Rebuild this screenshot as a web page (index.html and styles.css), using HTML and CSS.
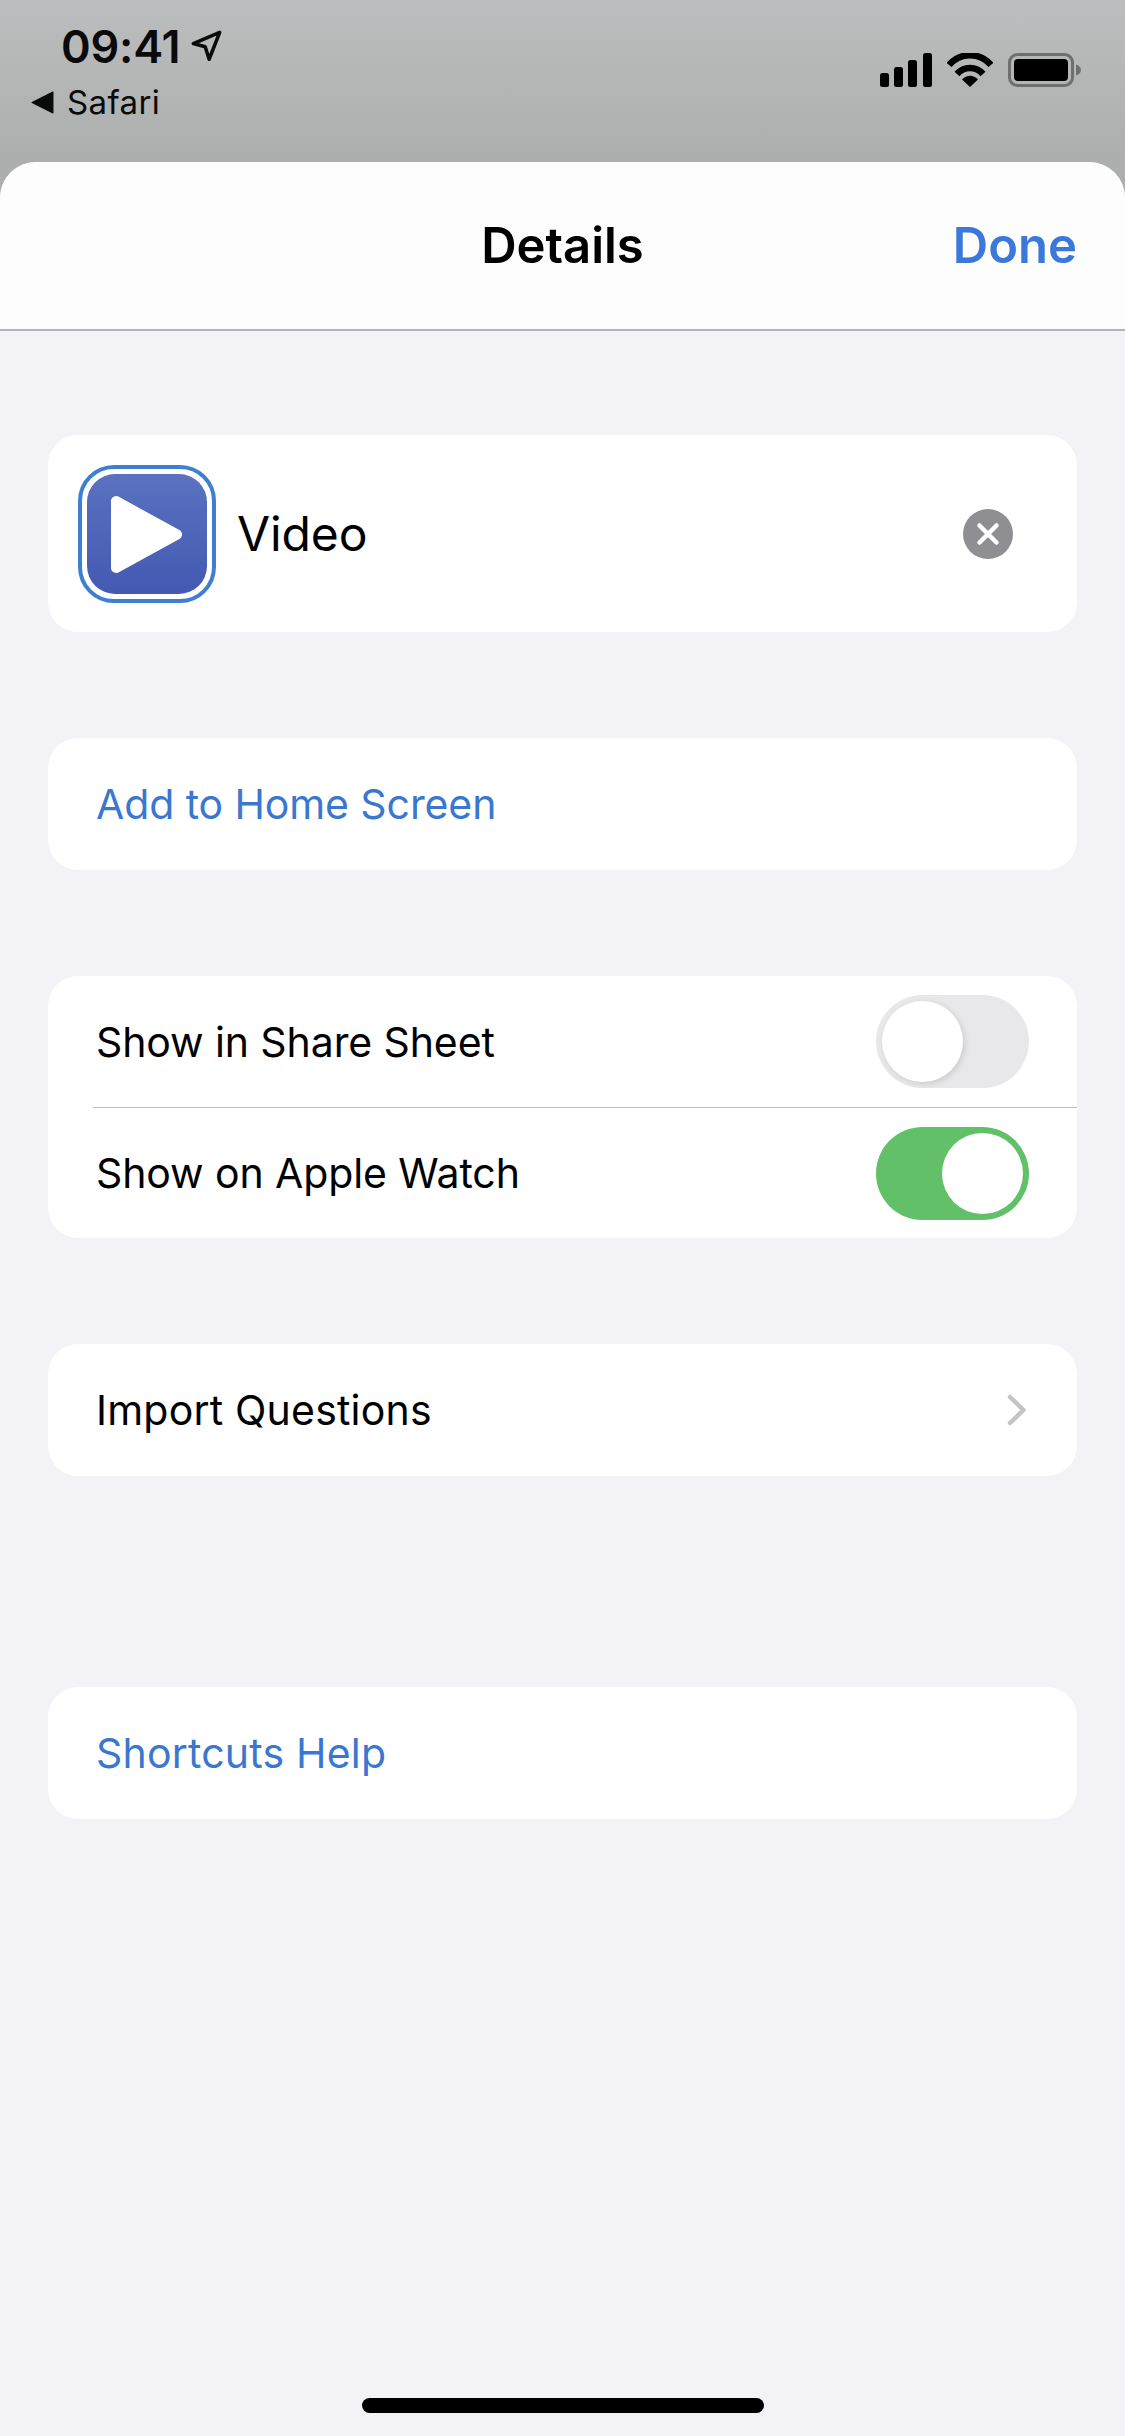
FILE: index.html
```html
<!DOCTYPE html>
<html lang="en">
<head>
<meta charset="utf-8">
<title>Details</title>
<link rel="stylesheet" href="styles.css">
</head>
<body>
<div class="screen">
  <header class="status">
    <div class="status-left">
      <div class="time-row">
        <span class="time">09:41</span>
        <svg class="loc" viewBox="0 0 30 30" width="33" height="33"><path d="M27 3 3 13.200 13.800 16.200 17.400 27.500Z" fill="none" stroke="#0a0a0a" stroke-width="3.200" stroke-linejoin="round"/></svg>
      </div>
      <div class="back-row">
        <svg class="back" viewBox="0 0 22 22" width="23" height="23"><path d="M21 1V21L1 11Z" fill="#0a0a0a" stroke="#0a0a0a" stroke-width="1" stroke-linejoin="round"/></svg>
        <span class="back-label">Safari</span>
      </div>
    </div>
    <div class="status-right">
      <svg viewBox="0 0 52 34" width="52" height="34"><g fill="#000"><rect x="0" y="20" width="9" height="14" rx="2.500"/><rect x="14" y="14" width="9" height="20" rx="2.500"/><rect x="28" y="7" width="9" height="27" rx="2.500"/><rect x="43" y="0" width="9" height="34" rx="2.500"/></g></svg>
      <svg viewBox="0 0 46 34" width="46" height="34"><path d="M2 12C13-1 33-1 44 12" fill="none" stroke="#000" stroke-width="6.500"/><path d="M10 21C17 13 29 13 36 21" fill="none" stroke="#000" stroke-width="6.500"/><path d="M15 26.500C20 21.500 26 21.500 31 26.500L23 34Z" fill="#000"/></svg>
      <svg viewBox="0 0 74 34" width="74" height="34"><rect x="1.500" y="1.500" width="63" height="31" rx="8" fill="none" stroke="#6f6f6f" stroke-width="3"/><rect x="6" y="6" width="54" height="22" rx="4" fill="#000"/><path d="M68 11.500C71.500 12.500 73 15 73 17C73 19 71.500 21.500 68 22.500Z" fill="#6f6f6f"/></svg>
    </div>
  </header>

  <section class="sheet">
    <div class="navbar">
      <h1 class="title">Details</h1>
      <span class="done">Done</span>
    </div>

    <main class="content">
      <div class="card name-card">
        <div class="icon-ring">
          <div class="icon-tile">
            <svg viewBox="0 0 120 120" width="120" height="120"><path d="M29 27V94L90 60.500Z" fill="#fff" stroke="#fff" stroke-width="10" stroke-linejoin="round"/></svg>
          </div>
        </div>
        <span class="row-text name-text">Video</span>
        <span class="clear">
          <svg viewBox="0 0 50 50" width="50" height="50"><path d="M16.500 16.500 33.500 33.500M33.500 16.500 16.500 33.500" stroke="#fff" stroke-width="4.500" stroke-linecap="round"/></svg>
        </span>
      </div>

      <div class="card row-card">
        <span class="row-text link">Add to Home Screen</span>
      </div>

      <div class="card toggles">
        <div class="toggle-row">
          <span class="row-text">Show in Share Sheet</span>
          <span class="switch"><span class="knob"></span></span>
        </div>
        <div class="divider"></div>
        <div class="toggle-row last">
          <span class="row-text">Show on Apple Watch</span>
          <span class="switch on"><span class="knob"></span></span>
        </div>
      </div>

      <div class="card row-card between">
        <span class="row-text wide">Import Questions</span>
        <svg class="chevron" viewBox="0 0 20 32" width="20" height="32"><path d="M3 3 16.500 16 3 29" fill="none" stroke="#c4c4c6" stroke-width="4.500" stroke-linecap="round" stroke-linejoin="round"/></svg>
      </div>

      <div class="card row-card help">
        <span class="row-text link wide">Shortcuts Help</span>
      </div>
    </main>

    <div class="home-bar"></div>
  </section>
</div>
</body>
</html>
```
FILE: styles.css
```css
* { box-sizing: border-box; }
html, body { margin: 0; padding: 0; }
body {
  width: 1125px;
  height: 2436px;
  overflow: hidden;
  font-family: "Inter", "Liberation Sans", sans-serif;
  color: #000;
}
.screen {
  width: 1125px;
  height: 2436px;
  display: flex;
  flex-direction: column;
  background: linear-gradient(#bbbdbe 0, #adafae 162px);
}
.status {
  height: 162px;
  flex: none;
  display: flex;
  justify-content: space-between;
  padding: 26px 43px 0 31px;
}
.time-row {
  display: flex;
  align-items: center;
  gap: 10px;
  padding-left: 30px;
  height: 42px;
}
.time {
  font-size: 45px;
  font-weight: 600;
  line-height: 42px;
  letter-spacing: -0.2px;
  color: #0a0a0a;
}
.loc { margin-top: -4px; }
.back-row {
  display: flex;
  align-items: center;
  gap: 13px;
  margin-top: 14px;
  height: 40px;
}
.back-label { font-size: 33px; line-height: 40px; letter-spacing: 0.4px; color: #0a0a0a; }
.status-right {
  display: flex;
  align-items: flex-start;
  gap: 15px;
  padding-top: 27px;
}
.sheet {
  flex: 1;
  display: flex;
  flex-direction: column;
  background: #f2f2f7;
  border-radius: 36px 36px 0 0;
  overflow: hidden;
}
.navbar {
  height: 169px;
  flex: none;
  display: flex;
  align-items: center;
  justify-content: center;
  position: relative;
  background: #fdfdfe;
  border-bottom: 2px solid #b5b5b7;
}
.title {
  margin: 0;
  font-size: 49px;
  font-weight: 600;
  line-height: 60px;
}
.done {
  position: absolute;
  right: 48px;
  top: 54px;
  font-size: 49px;
  font-weight: 600;
  line-height: 60px;
  color: #3a78dc;
}
.content {
  flex: 1;
  display: flex;
  flex-direction: column;
  gap: 106px;
  padding: 104px 48px 0;
}
.card {
  background: #fff;
  border-radius: 30px;
}
.row-text {
  font-size: 41px;
  line-height: 52px;
  letter-spacing: -0.1px;
  white-space: nowrap;
}
.row-text.wide { letter-spacing: 0.2px; }
.link { color: #3a78d0; }
.name-card {
  height: 197px;
  display: flex;
  align-items: center;
  padding: 0 64px 0 30px;
}
.icon-ring {
  width: 138px;
  height: 138px;
  flex: none;
  display: flex;
  align-items: center;
  justify-content: center;
  border: 4px solid #3f7fd2;
  border-radius: 36px;
}
.icon-tile {
  width: 120px;
  height: 120px;
  border-radius: 28px;
  background: linear-gradient(#5a72c0, #4359b3);
}
.icon-tile svg { display: block; }
.name-text { font-size: 48px; margin-left: 21px; flex: 1; }
.clear {
  width: 50px;
  height: 50px;
  flex: none;
  border-radius: 50%;
  background: #8e8e93;
}
.clear svg { display: block; }
.row-card {
  height: 132px;
  display: flex;
  align-items: center;
  padding: 0 48px;
}
.between { justify-content: space-between; padding-right: 50px; }
.help { margin-top: 105px; }
.toggles { height: 262px; display: flex; flex-direction: column; }
.toggle-row {
  height: 131px;
  flex: none;
  display: flex;
  align-items: center;
  justify-content: space-between;
  padding: 0 48px;
}
.toggle-row.last { height: 130px; }
.divider {
  height: 1px;
  flex: none;
  margin-left: 45px;
  background: #c0c0c2;
}
.switch {
  width: 153px;
  height: 93px;
  flex: none;
  display: flex;
  align-items: center;
  justify-content: flex-start;
  padding: 0 6px;
  border-radius: 47px;
  background: #e8e8ea;
}
.switch.on {
  justify-content: flex-end;
  background: #62c068;
}
.knob {
  width: 81px;
  height: 81px;
  border-radius: 50%;
  background: #fff;
  box-shadow: 2px 2px 6px rgba(0, 0, 0, 0.12);
}
.on .knob { box-shadow: none; }
.home-bar {
  width: 402px;
  height: 15px;
  flex: none;
  align-self: center;
  margin-bottom: 23px;
  border-radius: 8px;
  background: #000;
}
```
